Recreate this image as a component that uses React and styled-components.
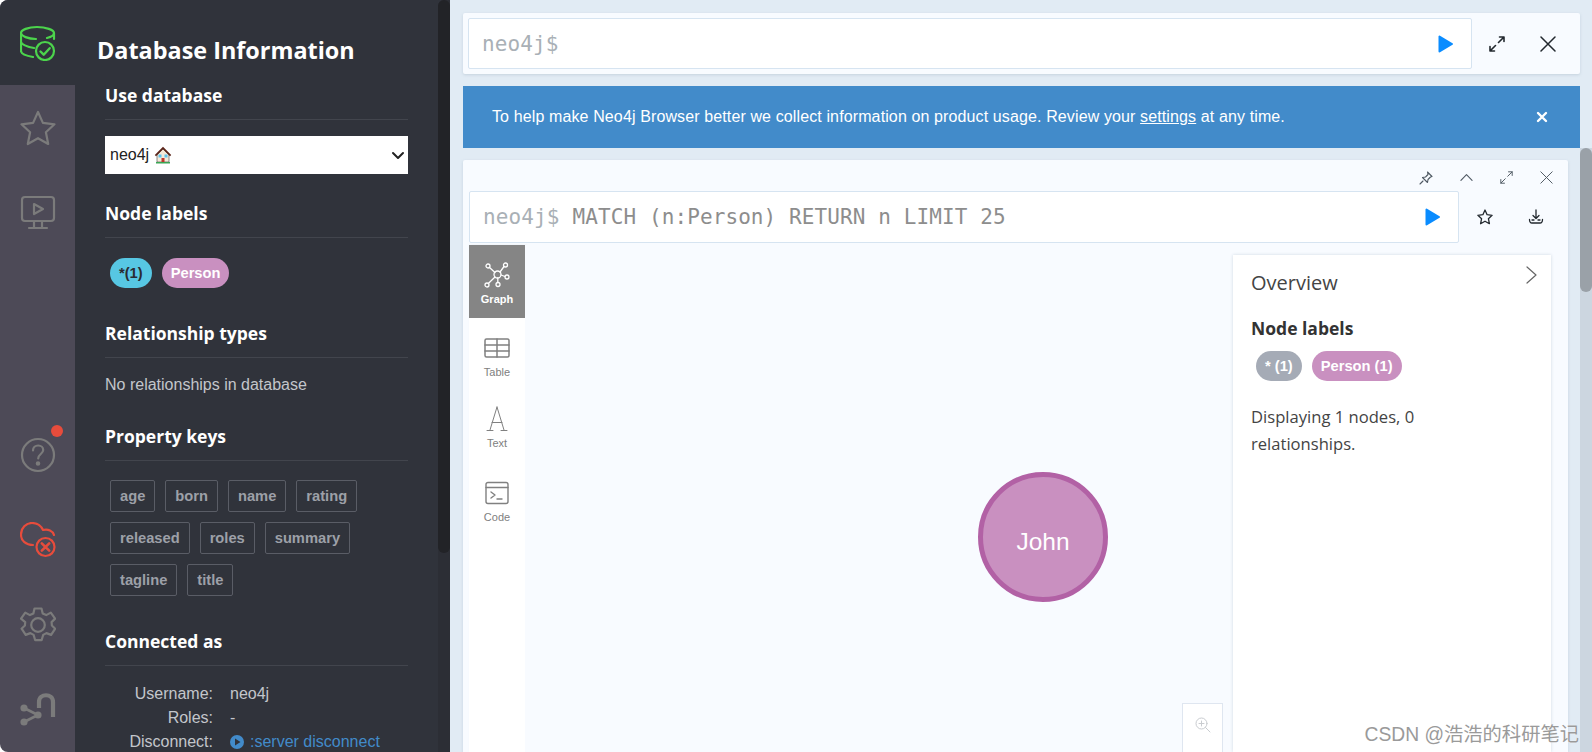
import React from "react";
import styled, { createGlobalStyle } from "styled-components";

const Global = createGlobalStyle`
  html, body { margin: 0; padding: 0; background: #fff; }
  #root { width: 1592px; height: 752px; overflow: hidden; }
  * { box-sizing: border-box; }
`;

const SANS = `"Liberation Sans", Arial, sans-serif`;
const OPEN = `"Open Sans", "Noto Sans", sans-serif`;
const MONO = `"DejaVu Sans Mono", "Liberation Mono", monospace`;

const Page = styled.div`
  display: flex; width: 1592px; height: 752px; overflow: hidden; position: relative; font-family: ${SANS};
`;
const Rail = styled.nav`
  width: 75px; flex: none; height: 100%; display: flex; flex-direction: column; justify-content: space-between;
  background: #4d4a57; border-radius: 8px 0 0 8px; overflow: hidden;
`;
const RailGroup = styled.div`display: flex; flex-direction: column;`;
const RailItem = styled.div`
  height: 85px; display: flex; align-items: center; justify-content: center; position: relative;
  background: ${p => (p.$active ? "#30333b" : "transparent")};
  color: ${p => p.$color || "#7b7b7b"};
`;
const Dot = styled.span`
  position: absolute; left: 51px; top: 13px; width: 12px; height: 12px; border-radius: 50%; background: #e74c3c;
`;
const Drawer = styled.aside`
  width: 375px; flex: none; height: 100%; background: #30333b; position: relative; overflow: hidden;
`;
const DrawerInner = styled.div`padding: 34px 42px 0 30px;`;
const DrawerTitle = styled.h1`
  margin: 0 0 17px -8px; font: 700 23.4px/32px ${OPEN}; color: #fff;
`;
const DrawerScroll = styled.div`
  position: absolute; right: 0; top: 0; bottom: 0; width: 12px; background: #2c2e35; border-radius: 6px 0 0 0;
  &::after { content: ""; position: absolute; left: 0; right: 0; top: 0; height: 553px; background: #222327; border-radius: 6px; }
`;
const SectionTitle = styled.h2`
  margin: 0; padding-bottom: 12px; font: 700 17.5px/24px ${OPEN}; color: #fff;
  border-bottom: 1px solid #42454d;
`;
const Section = styled.section`margin-bottom: ${p => p.$mb ?? 28}px;`;
const Select = styled.div`
  margin-top: 16px; height: 38px; background: #fff; display: flex; align-items: center; gap: 5px;
  padding: 0 3px 0 5px; font: 16px ${SANS}; color: #222;
`;
const SelectChev = styled.span`margin-left: auto; display: flex; color: #222;`;
const Chips = styled.div`display: flex; flex-wrap: wrap; gap: ${p => p.$gap || "10px"}; padding: ${p => p.$pad || "20px 0 0 5px"};`;
const Pill = styled.span`
  height: 30px; border-radius: 15px; padding: 0 9px; display: inline-flex; align-items: center;
  font: 700 14.7px ${SANS}; color: ${p => p.$fg || "#fff"}; background: ${p => p.$bg};
`;
const KeyTag = styled.span`
  height: 32px; border: 1px solid #5a5d66; border-radius: 2px; padding: 0 9px; display: inline-flex; align-items: center;
  font: 700 14.7px ${SANS}; color: #9da0a8;
`;
const Note = styled.p`margin: 17px 0 0; font: 16px/20px ${SANS}; color: #c3c6cb;`;
const InfoGrid = styled.div`
  display: grid; grid-template-columns: 108px 1fr; column-gap: 17px; row-gap: 4px; margin-top: 18px;
  font: 16px/20px ${SANS}; color: #c3c6cb;
`;
const InfoKey = styled.span`text-align: right;`;
const InfoLink = styled.span`display: flex; align-items: center; gap: 6px; color: #428bca; white-space: nowrap;`;

const Main = styled.main`
  flex: 1; min-width: 0; height: 100%; background: #e1ebf4; padding: 13px 12px 0 13px;
  display: flex; flex-direction: column; position: relative; overflow: hidden;
`;
const TopCard = styled.div`
  height: 61px; flex: none; background: #f8fbff; border-radius: 2px; box-shadow: 0 1px 3px rgba(120,140,160,.25);
  padding: 5px 0 5px 5px; display: flex; align-items: stretch;
`;
const Editor = styled.div`
  flex: 1; min-width: 0; background: #fff; border: 1px solid #d6e4f1; border-radius: 2px; display: flex; align-items: center;
  padding: 0 18px 0 13px; font: 21px ${MONO}; white-space: pre; letter-spacing: .1px;
`;
const Prompt = styled.span`color: #a9b0b6; margin-right: ${p => p.$mr || 0}px;`;
const Query = styled.span`color: #8d8d8d; flex: 1;`;
const Play = styled.span`display: flex; color: #0a8cff;`;
const Actions = styled.div`display: flex; flex: none; width: ${p => p.$w}px; padding-right: 7px; align-items: center;`;
const ActionBtn = styled.span`flex: 1; display: flex; justify-content: center; color: ${p => p.$color || "#22282e"};`;
const Banner = styled.div`
  margin-top: 12px; flex: none; height: 62px; background: #428bca; color: #fff; display: flex; align-items: center;
  padding: 0 32px 0 29px; font: 16px ${SANS}; letter-spacing: .12px;
  a { color: #fff; text-decoration: underline; }
`;
const BannerClose = styled.span`margin-left: auto; display: flex;`;
const Frame = styled.div`
  margin: 12px 12px 0 0; flex: 1; min-height: 0; background: #f8fbff; border-radius: 2px 2px 0 0;
  box-shadow: 0 1px 3px rgba(120,140,160,.25); padding-left: 6px; display: flex; flex-direction: column;
`;
const FrameHead = styled.div`
  height: 31px; flex: none; display: flex; justify-content: flex-end; align-items: center; padding: 4px 2px 0 0;
`;
const FrameBtn = styled.span`width: 40px; display: flex; justify-content: center; color: #4f5963;`;
const FrameEdit = styled.div`height: 52px; flex: none; display: flex;`;
const FrameBody = styled.div`flex: 1; min-height: 0; margin-top: 2px; display: flex;`;
const Tabs = styled.div`
  width: 56px; flex: none; background: #fff; display: flex; flex-direction: column; box-shadow: 1px 0 2px rgba(120,140,160,.15);
`;
const Tab = styled.div`
  height: ${p => p.$h}px; flex: none; display: flex; flex-direction: column; align-items: center; justify-content: flex-start;
  padding-top: ${p => p.$pt}px;
  background: ${p => (p.$active ? "#858585" : "transparent")};
  color: ${p => (p.$active ? "#fff" : "#808080")};
  font: ${p => (p.$active ? 700 : 400)} 11px/12px ${SANS};
  svg { margin-bottom: ${p => p.$gap ?? 2}px; }
`;
const Canvas = styled.div`flex: 1; min-width: 0; position: relative; background: #f8fbff; display: flex; justify-content: flex-end;`;
const Node = styled.div`
  position: absolute; left: 453px; top: 227px; width: 130px; height: 130px; border-radius: 50%;
  background: #c990c0; border: 5px solid #b261a5; color: #fff; font: 24.5px ${SANS};
  display: flex; align-items: center; justify-content: center; padding-top: 9px;
`;
const ZoomBtn = styled.div`
  position: absolute; left: 657px; top: 458px; width: 41px; height: 60px; background: #fff; border: 1px solid #dfe6f0;
  display: flex; justify-content: center; padding-top: 13px; color: #c9ccd0;
`;
const Overview = styled.div`
  width: 318px; flex: none; margin: 10px 17px 0 0; background: #fff; box-shadow: 0 0 3px rgba(120,140,160,.3);
  padding: 15px 18px; position: relative; color: #333;
`;
const OvTitle = styled.div`font: 400 20px/26px ${OPEN}; color: #444;`;
const OvLabel = styled.div`margin-top: 20px; font: 700 17.5px/24px ${OPEN}; color: #333;`;
const OvText = styled.p`margin: 22px 0 0; font: 400 16.6px/27px ${OPEN}; color: #444; width: 230px;`;
const OvChevron = styled.span`position: absolute; right: 10px; top: 11px; color: #666; display: flex;`;
const MainScroll = styled.div`
  position: absolute; right: 0; top: 148px; bottom: 0; width: 12px; background: #ccd6e0;
  &::after { content: ""; position: absolute; left: 0; right: 0; top: 0; height: 144px; background: #9aa1a8; border-radius: 6px; }
`;
const Watermark = styled.div`
  position: absolute; right: 13px; top: 723px; font: 19.3px/24px "Liberation Sans", "Noto Sans CJK SC", sans-serif; color: #9a9a9a;
  text-shadow: 0 0 1px #fff; white-space: nowrap;
`;

const Ico = ({ s = 36, vb = 36, w = 2.2, children, ...r }) => (
  <svg width={s} height={s} viewBox={`0 0 ${vb} ${vb}`} fill="none" stroke="currentColor" strokeWidth={w} strokeLinecap="round" strokeLinejoin="round" {...r}>{children}</svg>
);

const DbIcon = () => (
  <Ico>
    <path d="M1 8c0-3 7-6 16-6s17 3 17 6c0 2-3 4-7 5" />
    <path d="M1 8c0 3 7 6 15 6" />
    <path d="M34 8v6" />
    <path d="M1 8v9c0 2 6 5 13 6" />
    <path d="M1 17v9c0 3 6 5 12 6" />
    <circle cx="25" cy="26" r="9" />
    <path d="M20.5 26.5l3.2 3.2 6-6.5" strokeWidth="2.4" />
  </Ico>
);
const StarIcon = () => (
  <Ico><path d="M18 2l4.9 10.9 11.6 1.4-8.6 8 2.3 11.7L18 28.2 7.800 34l2.300-11.700-8.600-8 11.600-1.400z" /></Ico>
);
const MonitorIcon = () => (
  <Ico>
    <rect x="2" y="2" width="32" height="24" rx="3" />
    <path d="M14 9l9 5-9 5z" />
    <path d="M14 26v6M22 26v6M9 33h18" />
  </Ico>
);
const HelpIcon = () => (
  <Ico>
    <circle cx="18" cy="18" r="16" />
    <path d="M13 13.500c0-3 2.300-5 5.200-5s5 2 5 4.500c0 4-5 4-5 8.500" />
    <circle cx="18" cy="26.500" r="1.200" />
  </Ico>
);
const CloudXIcon = () => (
  <Ico>
    <path d="M13 23C6 23 1 19 1 12.500S6 1 12 1c5 0 9 3 11 7 5-1.500 10 1 11 5" />
    <circle cx="25.500" cy="25" r="9" />
    <path d="M21.800 21.300l7.400 7.400M29.200 21.300l-7.400 7.400" strokeWidth="2.600" />
  </Ico>
);
const GearIcon = () => (
  <Ico>
    <circle cx="18" cy="18" r="6.800" />
    <path d="M14.500 1.500h7l1.200 5 3.500 1.600 4.600-2.500 4.300 6-3.500 3.500.3 3.400 3.300 3.200-4.100 6.200-4.700-1.800-3.200 1.800-1.600 5.300h-6.400l-1.600-5.300-3.200-1.800-4.700 1.800-4.100-6.200 3.300-3.200.3-3.400L1 11.600l4.300-6 4.600 2.500 3.500-1.600z" />
  </Ico>
);
const NeoIcon = () => (
  <svg width="36" height="36" viewBox="0 0 36 36" fill="none">
    <path d="M19 16V10C19 1 33 1 33 10v15" stroke="currentColor" strokeWidth="4.200" />
    <path d="M4 16l14 7-14 7" stroke="currentColor" strokeWidth="2.600" />
    <circle cx="4" cy="16" r="3.600" fill="currentColor" />
    <circle cx="4" cy="30" r="3.600" fill="currentColor" />
    <circle cx="18" cy="23" r="3.600" fill="currentColor" />
  </svg>
);
const House = () => (
  <svg width="18" height="18" viewBox="0 0 18 18">
    <path d="M3 9l6-6 6 6v7H3z" fill="#f4e9d8" stroke="#444" strokeWidth=".6" />
    <path d="M9 .800L.800 9l1.200 1.200 7-7 7 7L17.200 9z" fill="#5b2418" />
    <rect x="4.500" y="8.500" width="3" height="3" fill="#5cc4ee" />
    <rect x="10.500" y="8.500" width="3" height="3" fill="#5cc4ee" />
    <rect x="7.500" y="12" width="3" height="4" fill="#c0392b" />
    <rect x="2" y="16" width="14" height="1.500" fill="#3aa655" />
  </svg>
);
const PlayIcon = () => (
  <svg width="15" height="18" viewBox="0 0 15 18"><path d="M1.500 1.500v15L14 9z" fill="currentColor" stroke="currentColor" strokeWidth="2" strokeLinejoin="round" /></svg>
);
const ExpandIcon = ({ s = 16, w = 1.600 }) => (
  <Ico s={s} vb={16} w={w}>
    <path d="M9.500 6.500L15 1M10.500 1H15v4.500M6.500 9.500L1 15M1 10.500V15h4.500" />
  </Ico>
);
const CloseIcon = ({ s = 16, w = 1.500 }) => (
  <Ico s={s} vb={16} w={w}><path d="M1 1l14 14M15 1L1 15" /></Ico>
);
const PinIcon = () => (
  <Ico s={14} vb={14} w={1.100}>
    <path d="M8.500 1l4.500 4.500-1.500.5-2.500 2.500-.5 3-5-5 3-.5L9 3.500zM4 10l-3 3" />
  </Ico>
);
const UpIcon = () => (<Ico s={13} vb={14} w={1.200}><path d="M1 10l6-6 6 6" /></Ico>);
const FrameStar = () => (
  <Ico s={16} vb={16} w={1.300}><path d="M8 1l2.100 4.700 5 .6-3.700 3.400 1 5L8 12.200l-4.400 2.500 1-5L.9 6.300l5-.6z" /></Ico>
);
const DownloadIcon = () => (
  <Ico s={16} vb={16} w={1.300}><path d="M8 1v8M5 6.500L8 9.500l3-3M1.500 10.500c0 2.500 1 3.500 2.500 3.500h8c1.500 0 2.500-1 2.500-3.500M4 11h2M10 11h2" /></Ico>
);
const GraphIcon = () => (
  <Ico s={26} vb={26} w={1.300}>
    <circle cx="13.500" cy="12.500" r="3.500" />
    <circle cx="4" cy="4" r="2" /><circle cx="21.500" cy="3" r="2" /><circle cx="23" cy="15" r="2" />
    <circle cx="14" cy="22.500" r="2" /><circle cx="3" cy="23" r="2" />
    <path d="M5.500 5.500l5.500 5M20 4.500l-4 5.500M17 13l4 1.500M13.800 16v4.500M11 15l-6.700 6.500" />
  </Ico>
);
const TableIcon = () => (
  <Ico s={26} vb={26} w={1.500}>
    <rect x="1" y="3" width="24" height="18" rx="1.500" />
    <path d="M1 9h24M1 15h24M13 3v18" />
  </Ico>
);
const TextIcon = () => (
  <Ico s={26} vb={26} w={1}>
    <path d="M13 1L6 24M13 1l7 23M8 16.500h10M3 24.500h6M17 24.500h6" />
  </Ico>
);
const CodeIcon = () => (
  <Ico s={26} vb={26} w={1.400}>
    <rect x="2" y="1.500" width="22" height="21" rx="2" />
    <path d="M2 6.500h22M7 11l4 3-4 3M13 18h5" />
  </Ico>
);
const ZoomIcon = () => (
  <Ico s={16} vb={16} w={1}>
    <circle cx="6.500" cy="6.500" r="5.500" /><path d="M10.500 10.500L15 15M6.500 4v5M4 6.500h5" />
  </Ico>
);
const ChevronThin = () => (
  <Ico s={18} vb={18} w={1.200}><path d="M4 1l9 8-9 8" /></Ico>
);
const ChevronSel = () => (
  <Ico s={14} vb={14} w={2}><path d="M2 5l5 5 5-5" /></Ico>
);
const CircPlay = () => (
  <svg width="14" height="14" viewBox="0 0 14 14"><circle cx="7" cy="7" r="7" fill="#428bca" /><path d="M5 3.500v7L10.500 7z" fill="#30333b" /></svg>
);
const SmallX = () => (
  <Ico s={12} vb={12} w={2.400} style={{ color: "#fff" }}><path d="M2 2l8 8M10 2l-8 8" /></Ico>
);

const keys = ["age", "born", "name", "rating", "released", "roles", "summary", "tagline", "title"];

export default function App() {
  return (
    <Page>
      <Global />
      <Rail>
        <RailGroup>
          <RailItem $active $color="#4cd44c"><DbIcon /></RailItem>
          <RailItem><StarIcon /></RailItem>
          <RailItem><MonitorIcon /></RailItem>
        </RailGroup>
        <RailGroup>
          <RailItem><Dot /><HelpIcon /></RailItem>
          <RailItem $color="#e74c3c"><CloudXIcon /></RailItem>
          <RailItem><GearIcon /></RailItem>
          <RailItem><NeoIcon /></RailItem>
        </RailGroup>
      </Rail>
      <Drawer>
        <DrawerInner>
          <DrawerTitle>Database Information</DrawerTitle>
          <Section $mb={27}>
            <SectionTitle>Use database</SectionTitle>
            <Select>neo4j <House /><SelectChev><ChevronSel /></SelectChev></Select>
          </Section>
          <Section $mb={33}>
            <SectionTitle>Node labels</SectionTitle>
            <Chips>
              <Pill $bg="#57c7e3" $fg="#2a2c33">*(1)</Pill>
              <Pill $bg="#c990c0">Person</Pill>
            </Chips>
          </Section>
          <Section $mb={29}>
            <SectionTitle>Relationship types</SectionTitle>
            <Note>No relationships in database</Note>
          </Section>
          <Section $mb={33}>
            <SectionTitle>Property keys</SectionTitle>
            <Chips $gap="10px" $pad="19px 40px 0 5px">
              {keys.map(k => <KeyTag key={k}>{k}</KeyTag>)}
            </Chips>
          </Section>
          <Section $mb={0}>
            <SectionTitle>Connected as</SectionTitle>
            <InfoGrid>
              <InfoKey>Username:</InfoKey><span>neo4j</span>
              <InfoKey>Roles:</InfoKey><span>-</span>
              <InfoKey>Disconnect:</InfoKey><InfoLink><CircPlay />:server disconnect</InfoLink>
            </InfoGrid>
          </Section>
        </DrawerInner>
        <DrawerScroll />
      </Drawer>
      <Main>
        <TopCard>
          <Editor><Prompt>neo4j$</Prompt><Query /><Play><PlayIcon /></Play></Editor>
          <Actions $w={108}>
            <ActionBtn><ExpandIcon /></ActionBtn>
            <ActionBtn><CloseIcon /></ActionBtn>
          </Actions>
        </TopCard>
        <Banner>
          <span>To help make Neo4j Browser better we collect information on product usage. Review your <a>settings</a> at any time.</span>
          <BannerClose><SmallX /></BannerClose>
        </Banner>
        <Frame>
          <FrameHead>
            <FrameBtn><PinIcon /></FrameBtn>
            <FrameBtn><UpIcon /></FrameBtn>
            <FrameBtn><ExpandIcon s={13} w={1.200} /></FrameBtn>
            <FrameBtn><CloseIcon s={13} w={1.200} /></FrameBtn>
          </FrameHead>
          <FrameEdit>
            <Editor><Prompt $mr={13}>neo4j$</Prompt><Query>MATCH (n:Person) RETURN n LIMIT 25</Query><Play><PlayIcon /></Play></Editor>
            <Actions $w={109}>
              <ActionBtn><FrameStar /></ActionBtn>
              <ActionBtn><DownloadIcon /></ActionBtn>
            </Actions>
          </FrameEdit>
          <FrameBody>
            <Tabs>
              <Tab $active $h={73} $pt={17} $gap={5}><GraphIcon />Graph</Tab>
              <Tab $h={71} $pt={18} $gap={4}><TableIcon />Table</Tab>
              <Tab $h={74} $pt={17} $gap={5}><TextIcon />Text</Tab>
              <Tab $h={60} $pt={18} $gap={4}><CodeIcon />Code</Tab>
            </Tabs>
            <Canvas>
              <Node>John</Node>
              <ZoomBtn><ZoomIcon /></ZoomBtn>
              <Overview>
                <OvChevron><ChevronThin /></OvChevron>
                <OvTitle>Overview</OvTitle>
                <OvLabel>Node labels</OvLabel>
                <Chips $pad="11px 0 0 5px">
                  <Pill $bg="#a5abb6">* (1)</Pill>
                  <Pill $bg="#c990c0">Person (1)</Pill>
                </Chips>
                <OvText>Displaying 1 nodes, 0 relationships.</OvText>
              </Overview>
            </Canvas>
          </FrameBody>
        </Frame>
        <MainScroll />
      </Main>
      <Watermark>CSDN @浩浩的科研笔记</Watermark>
    </Page>
  );
}
